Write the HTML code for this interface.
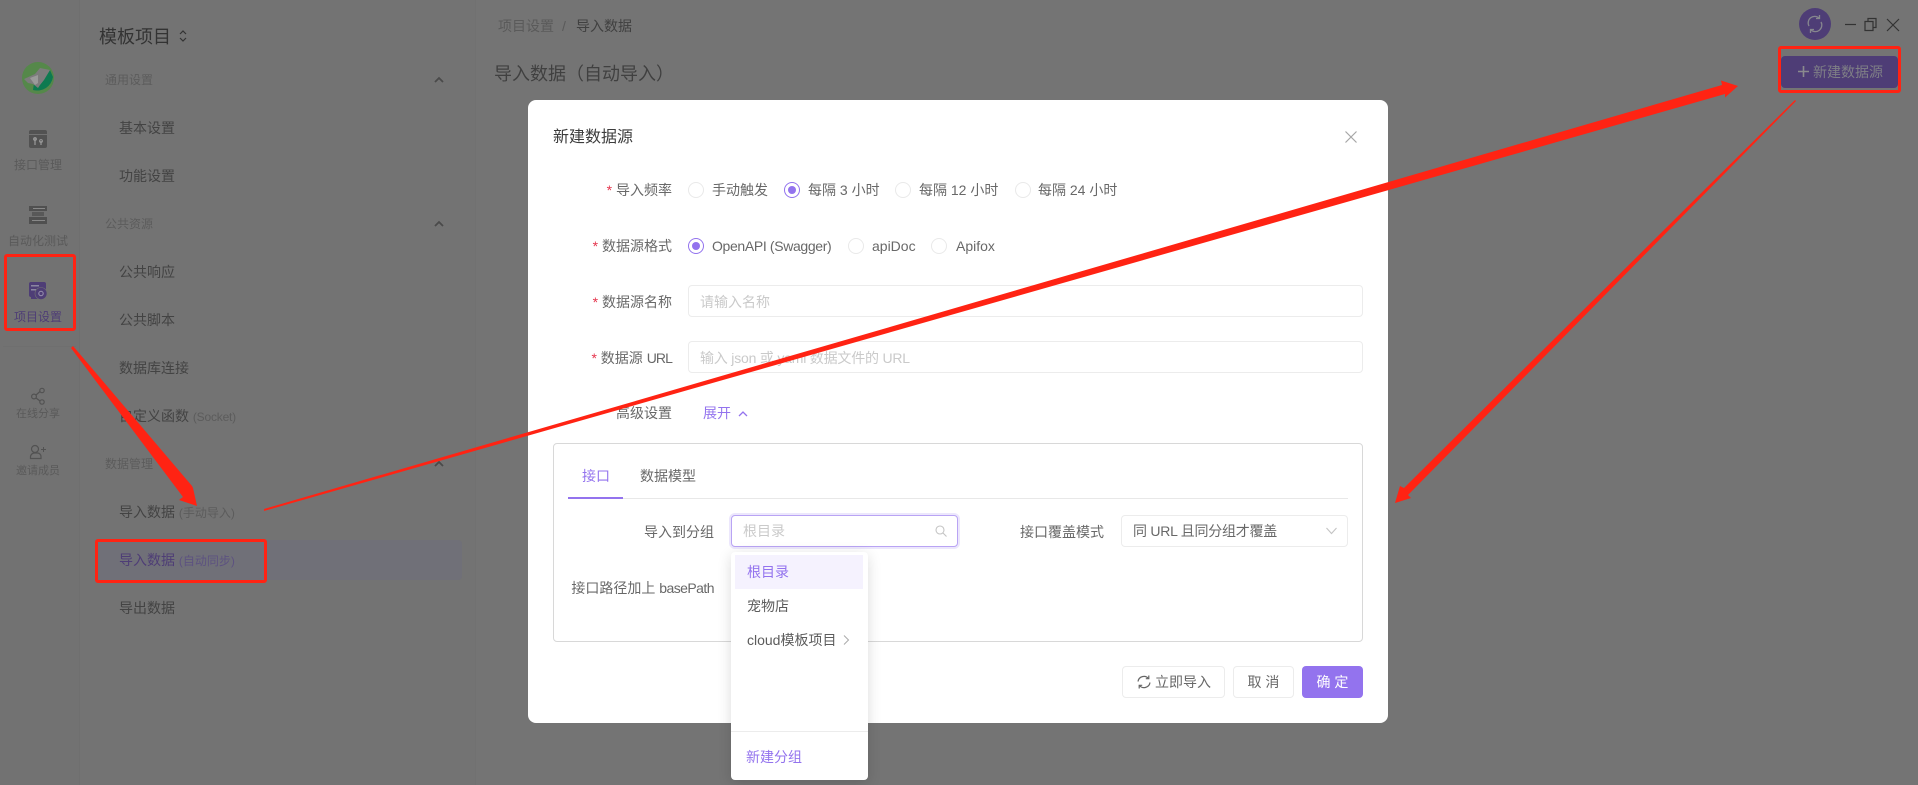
<!DOCTYPE html>
<html lang="zh"><head><meta charset="utf-8"><title>新建数据源</title>
<style>
html,body{margin:0;padding:0;width:1918px;height:785px;overflow:hidden;background:#747474}
body{position:relative;font-family:"Liberation Sans","Noto Sans CJK SC",sans-serif;font-size:14px}
.a{position:absolute;box-sizing:border-box}
.t{position:absolute;white-space:nowrap;line-height:20px;height:20px}
.d{color:#434343}.g{color:#5c5c5c;font-size:12px}.s{color:#5a5a5a;font-size:12px}
.p{color:#4e3d76}
.m{color:#686868}
.st{color:#e5354d}
.r{position:absolute;box-sizing:border-box;width:16px;height:16px;border-radius:50%;border:1px solid #e9e9e9;background:#fff}
.r.on{border-color:#9373ee}
.r.on:after{content:"";position:absolute;left:3px;top:3px;width:8px;height:8px;border-radius:50%;background:#9373ee}
.i{position:absolute;box-sizing:border-box;background:#fff;border:1px solid #ececec;border-radius:4px}
.ph{color:#cacaca}
.u{color:#9373ee}
svg{position:absolute;overflow:visible}
</style></head><body>

<div class="a" style="left:0;top:0;width:80px;height:785px;background:#727272;border-right:1px solid #6f6f6f"></div>
<div class="a" style="left:80px;top:0;width:396px;height:785px;background:#737373;border-right:1px solid #717171"></div>

<svg style="left:0;top:0" width="80" height="500" viewBox="0 0 80 500">
<circle cx="38" cy="78" r="16" fill="#55884a"/>
<path d="M33 90a16 16 0 0 0 20-13l-3-7-8 12-4 3-4-2z" fill="#0d7a50"/>
<path d="M24 79l11-5 5-6 10 2-6 10-4 5-2 3-5-4-5-1z" fill="#7c7c7c"/>
<path d="M30 78l8-3 0 8-3 2z" fill="#9a9a9a"/>
<rect x="29" y="130" width="18" height="18" rx="2" fill="#525252"/><rect x="29" y="134" width="18" height="1" fill="#727272"/>
<path d="M35 138v7M41 141v4" stroke="#9a9a9a" stroke-width="1.2"/><circle cx="35" cy="139" r="1.4" fill="none" stroke="#9a9a9a"/><circle cx="41" cy="141" r="1.4" fill="none" stroke="#9a9a9a"/>
<rect x="29" y="206" width="18" height="5" fill="#505050"/><rect x="33" y="208" width="12" height="1" fill="#888"/>
<rect x="32" y="212" width="12" height="4" fill="#585858"/>
<rect x="29" y="217" width="18" height="7" fill="#505050"/><rect x="32" y="220" width="13" height="1" fill="#888"/>
<rect x="29" y="282" width="17" height="15" rx="2" fill="#4e3d76"/><rect x="31" y="285" width="8" height="1.5" fill="#8b86a0"/><rect x="31" y="289" width="5" height="1.5" fill="#8b86a0"/>
<rect x="31" y="297" width="8" height="2" fill="#4e3d76"/>
<circle cx="41" cy="293.5" r="6" fill="#4e3d76" stroke="#737373" stroke-width=".6"/><circle cx="41" cy="293.5" r="2.2" fill="none" stroke="#9a93b0"/>
<g fill="none" stroke="#525252" stroke-width="1.2"><circle cx="42" cy="390.5" r="2.2"/><circle cx="34" cy="396.5" r="2.4"/><circle cx="42" cy="402" r="2.2"/><path d="M36 395l4-3.5M36 398l4 3"/>
<circle cx="35" cy="449" r="3.5"/><path d="M30.500 458.500v-2a4 4 0 0 1 4-3.500h3a3.500 3.500 0 0 1 3.500 3.500v2z"/><path d="M41 449.500h5M43.500 447v5" stroke-width="1"/></g>
<rect x="3" y="346" width="73" height="1" fill="#6f6f6f"/>
</svg>
<div class="t s" style="left:0;width:76px;text-align:center;top:155px">接口管理</div>
<div class="t s" style="left:0;width:76px;text-align:center;top:231px">自动化测试</div>
<div class="t s p" style="left:0;width:76px;text-align:center;top:307px;color:#4e3d76">项目设置</div>
<div class="t s" style="left:0;width:76px;text-align:center;top:404px;font-size:11px">在线分享</div>
<div class="t s" style="left:0;width:76px;text-align:center;top:461px;font-size:11px">邀请成员</div>

<div class="t" style="left:99px;top:27px;font-size:18px;color:#333">模板项目</div>
<svg style="left:177px;top:28px" width="12" height="16" fill="none" stroke="#333" stroke-width="1.2"><path d="M3 6l3-3 3 3M3 10l3 3 3-3"/></svg>

<div class="t g" style="left:105px;top:70px">通用设置</div>
<div class="t g" style="left:105px;top:214px">公共资源</div>
<div class="t g" style="left:105px;top:454px">数据管理</div>
<svg style="left:434px;top:76px" width="10" height="8" fill="none" stroke="#4a4a4a" stroke-width="1.800"><path d="M1 6l4-4 4 4"/></svg>
<svg style="left:434px;top:220px" width="10" height="8" fill="none" stroke="#4a4a4a" stroke-width="1.800"><path d="M1 6l4-4 4 4"/></svg>
<svg style="left:434px;top:460px" width="10" height="8" fill="none" stroke="#4a4a4a" stroke-width="1.800"><path d="M1 6l4-4 4 4"/></svg>

<div class="t d" style="left:119px;top:118px">基本设置</div>
<div class="t d" style="left:119px;top:166px">功能设置</div>
<div class="t d" style="left:119px;top:262px">公共响应</div>
<div class="t d" style="left:119px;top:310px">公共脚本</div>
<div class="t d" style="left:119px;top:358px">数据库连接</div>
<div class="t d" style="left:119px;top:406px">自定义函数 <span class="g" style="letter-spacing:-.2px">(Socket)</span></div>
<div class="t d" style="left:119px;top:502px">导入数据 <span class="g">(手动导入)</span></div>
<div class="a" style="left:96px;top:540px;width:366px;height:40px;border-radius:4px;background:#707078"></div>
<div class="t" style="left:119px;top:550px;color:#4e3d76">导入数据 <span style="font-size:12px;color:#5d5280">(自动同步)</span></div>
<div class="t d" style="left:119px;top:598px">导出数据</div>

<div class="t" style="left:498px;top:16px;color:#5a5a5a">项目设置</div>
<div class="t" style="left:562px;top:16px;color:#5a5a5a">/</div>
<div class="t" style="left:576px;top:16px;color:#404040">导入数据</div>
<div class="t" style="left:494px;top:64px;font-size:18px;color:#404040">导入数据（自动导入）</div>

<svg style="left:1799px;top:8px" width="110" height="32">
<circle cx="16" cy="16" r="16" fill="#4e3d76"/>
<g fill="none" stroke="#86868e" stroke-width="1.300"><path d="M10 18a6.500 6.500 0 0 1 10-8M22 14a6.500 6.500 0 0 1-10 8"/><path d="M20.500 7v3.500H17M11.500 25v-3.500H15"/></g>
<g fill="none" stroke="#333" stroke-width="1.200"><path d="M46 16.500h11"/><path d="M66 13.500h8v9h-8zM69 13.500v-3h8v9h-3"/><path d="M88 11l12 12M100 11l-12 12"/></g>
</svg>

<div class="a" style="left:1781px;top:56px;width:117px;height:32px;border-radius:4px;background:#4e3d76"></div>
<svg style="left:1798px;top:66px" width="12" height="12"><path d="M5.500 0v11M0 5.500h11" stroke="#8a8a8e" stroke-width="1.600"/></svg>
<div class="t" style="left:1813px;top:62px;color:#7f7f86">新建数据源</div>

<div class="a" style="left:528px;top:100px;width:860px;height:623px;border-radius:8px;background:#fff"></div>
<div class="t" style="left:553px;top:128px;font-size:16px;color:#3c3c3c">新建数据源</div>
<svg style="left:1345px;top:131px" width="12" height="12" fill="none" stroke="#a6a6a6" stroke-width="1.200"><path d="M.5.5l11 11M11.500.5l-11 11"/></svg>

<div class="t m" style="right:1246px;top:180px"><span class="st">* </span>导入频率</div>
<div class="t m" style="right:1246px;top:236px"><span class="st">* </span>数据源格式</div>
<div class="t m" style="right:1246px;top:292px"><span class="st">* </span>数据源名称</div>
<div class="t m" style="right:1246px;top:348px"><span class="st">* </span>数据源 <span style="letter-spacing:-.9px">URL</span></div>
<div class="t m" style="right:1246px;top:403px">高级设置</div>

<div class="r" style="left:688px;top:182px"></div><div class="t m" style="left:712px;top:180px">手动触发</div>
<div class="r on" style="left:784px;top:182px"></div><div class="t m" style="left:808px;top:180px">每隔 3 小时</div>
<div class="r" style="left:895px;top:182px"></div><div class="t m" style="left:919px;top:180px">每隔 12 小时</div>
<div class="r" style="left:1015px;top:182px"></div><div class="t m" style="left:1038px;top:180px">每隔 24 小时</div>

<div class="r on" style="left:688px;top:238px"></div><div class="t m" style="left:712px;top:236px;letter-spacing:-.35px">OpenAPI (Swagger)</div>
<div class="r" style="left:848px;top:238px"></div><div class="t m" style="left:872px;top:236px">apiDoc</div>
<div class="r" style="left:931px;top:238px"></div><div class="t m" style="left:956px;top:236px">Apifox</div>

<div class="i" style="left:688px;top:285px;width:675px;height:32px"></div>
<div class="t ph" style="left:700px;top:292px">请输入名称</div>
<div class="i" style="left:688px;top:341px;width:675px;height:32px"></div>
<div class="t ph" style="left:700px;top:348px;letter-spacing:-.2px">输入 json 或 yaml 数据文件的 URL</div>

<div class="t u" style="left:703px;top:403px">展开</div>
<svg style="left:738px;top:410px" width="10" height="7" fill="none" stroke="#9373ee" stroke-width="1.300"><path d="M1 6l4-4 4 4"/></svg>

<div class="a" style="left:553px;top:443px;width:810px;height:199px;border:1px solid #d8d8d8;border-radius:4px"></div>
<div class="t u" style="left:582px;top:466px">接口</div>
<div class="t m" style="left:640px;top:466px">数据模型</div>
<div class="a" style="left:568px;top:498px;width:780px;height:1px;background:#e8e8e8"></div>
<div class="a" style="left:568px;top:497px;width:55px;height:2px;background:#9373ee"></div>

<div class="t m" style="right:1204px;top:522px">导入到分组</div>
<div class="a" style="left:731px;top:515px;width:227px;height:32px;background:#fff;border:1px solid #b9a4f4;border-radius:4px;box-shadow:0 0 0 2px #ece7fc"></div>
<div class="t ph" style="left:743px;top:521px">根目录</div>
<svg style="left:935px;top:525px" width="12" height="12" fill="none" stroke="#c4c4c4" stroke-width="1.100"><circle cx="5" cy="5" r="4"/><path d="M8 8l3.500 3.500"/></svg>

<div class="t m" style="right:1204px;top:578px">接口路径加上 <span style="letter-spacing:-.55px">basePath</span></div>

<div class="t m" style="right:814px;top:522px">接口覆盖模式</div>
<div class="i" style="left:1121px;top:515px;width:227px;height:32px"></div>
<div class="t m" style="left:1133px;top:521px;letter-spacing:-.25px">同 URL 且同分组才覆盖</div>
<svg style="left:1326px;top:527px" width="11" height="8" fill="none" stroke="#c4c4c4" stroke-width="1.100"><path d="M.5 1l5 5.500 5-5.500"/></svg>

<div class="a" style="left:731px;top:552px;width:137px;height:228px;background:#fff;border-radius:4px;box-shadow:0 3px 14px rgba(0,0,0,.14)"></div>
<div class="a" style="left:735px;top:555px;width:128px;height:34px;background:#f5f2fe"></div>
<div class="t u" style="left:747px;top:562px">根目录</div>
<div class="t m" style="left:747px;top:596px;color:#5c5c5c">宠物店</div>
<div class="t m" style="left:747px;top:630px;color:#5c5c5c">cloud模板项目</div>
<svg style="left:843px;top:635px" width="7" height="10" fill="none" stroke="#aaa" stroke-width="1"><path d="M1 .5l4.500 4.500-4.500 4.500"/></svg>
<div class="a" style="left:731px;top:731px;width:137px;height:1px;background:#ececec"></div>
<div class="t u" style="left:746px;top:747px">新建分组</div>

<div class="a" style="left:1122px;top:666px;width:103px;height:32px;border:1px solid #ececec;border-radius:4px;background:#fff"></div>
<svg style="left:1137px;top:675px" width="14" height="14" fill="none" stroke="#666" stroke-width="1.200"><path d="M1 6.500a6 6 0 0 1 10.500-3M13 7.500a6 6 0 0 1-10.500 3"/><path d="M11.800.5v3.200H8.800M2.200 13.500v-3.200h3"/></svg>
<div class="t m" style="left:1155px;top:672px">立即导入</div>
<div class="a" style="left:1233px;top:666px;width:61px;height:32px;border:1px solid #ececec;border-radius:4px;background:#fff"></div>
<div class="t m" style="left:1233px;width:61px;text-align:center;top:672px">取 消</div>
<div class="a" style="left:1302px;top:666px;width:61px;height:32px;border-radius:4px;background:#9373ee"></div>
<div class="t" style="left:1302px;width:61px;text-align:center;top:672px;color:#fff">确 定</div>

<div class="a" style="left:4px;top:254px;width:72px;height:77px;border:3px solid #ff2313;border-radius:3px"></div>
<div class="a" style="left:95px;top:539px;width:172px;height:44px;border:3px solid #ff2313;border-radius:3px"></div>
<div class="a" style="left:1778px;top:46px;width:123px;height:47px;border:3px solid #ff2313;border-radius:3px"></div>

<svg style="left:0;top:0" width="1918" height="785" viewBox="0 0 1918 785">
<path fill="#ff2313" d="M73 346L192 486L193 488L197 506L179 500L183 497L71 348Z"/>
<path fill="#ff2313" d="M264 509L1722 85L1721 80.500L1738 86L1725 97.500L1725 94L264 511Z"/>
<path fill="#ff2313" d="M1795 100L1404 488L1400 486L1395 503L1411 498L1408 495L1796 101Z"/>
</svg>
</body></html>
